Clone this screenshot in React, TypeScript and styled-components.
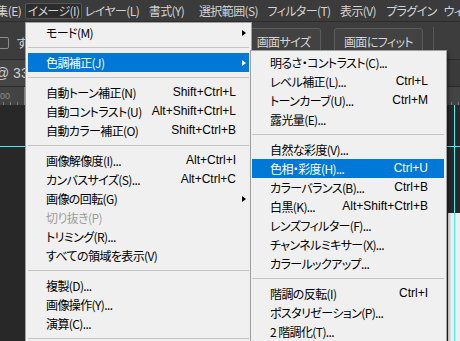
import React from 'react';
import styled, { createGlobalStyle } from 'styled-components';

const UI_FONT = `"Noto Sans CJK JP", "Liberation Sans", sans-serif`;
const KEY_FONT = `"Liberation Sans", "Noto Sans CJK JP", sans-serif`;

type Entry =
  | { sep: true }
  | { label: string; keys?: string; sub?: boolean; active?: boolean; disabled?: boolean };

// widths follow the menu bar hit boxes of the original window
const TOP_MENUS = [
  { label: '編集(E)', w: 42 },
  { label: 'イメージ(I)', w: 57, active: true },
  { label: 'レイヤー(L)', w: 58 },
  { label: '書式(Y)', w: 49 },
  { label: '選択範囲(S)', w: 73 },
  { label: 'フィルター(T)', w: 66 },
  { label: '表示(V)', w: 50 },
  { label: 'プラグイン', w: 55 },
  { label: 'ウィンドウ(W)', w: 72 },
  { label: 'ヘルプ(H)', w: 56 },
];

const IMAGE_MENU: Entry[] = [
  { label: 'モード(M)', sub: true },
  { sep: true },
  { label: '色調補正(J)', sub: true, active: true },
  { sep: true },
  { label: '自動トーン補正(N)', keys: 'Shift+Ctrl+L' },
  { label: '自動コントラスト(U)', keys: 'Alt+Shift+Ctrl+L' },
  { label: '自動カラー補正(O)', keys: 'Shift+Ctrl+B' },
  { sep: true },
  { label: '画像解像度(I)...', keys: 'Alt+Ctrl+I' },
  { label: 'カンバスサイズ(S)...', keys: 'Alt+Ctrl+C' },
  { label: '画像の回転(G)', sub: true },
  { label: '切り抜き(P)', disabled: true },
  { label: 'トリミング(R)...' },
  { label: 'すべての領域を表示(V)' },
  { sep: true },
  { label: '複製(D)...' },
  { label: '画像操作(Y)...' },
  { label: '演算(C)...' },
  { sep: true },
  { label: '変数(B)', sub: true },
];

const ADJUST_MENU: Entry[] = [
  { label: '明るさ・コントラスト(C)...' },
  { label: 'レベル補正(L)...', keys: 'Ctrl+L' },
  { label: 'トーンカーブ(U)...', keys: 'Ctrl+M' },
  { label: '露光量(E)...' },
  { sep: true },
  { label: '自然な彩度(V)...' },
  { label: '色相・彩度(H)...', keys: 'Ctrl+U', active: true },
  { label: 'カラーバランス(B)...', keys: 'Ctrl+B' },
  { label: '白黒(K)...', keys: 'Alt+Shift+Ctrl+B' },
  { label: 'レンズフィルター(F)...' },
  { label: 'チャンネルミキサー(X)...' },
  { label: 'カラールックアップ...' },
  { sep: true },
  { label: '階調の反転(I)', keys: 'Ctrl+I' },
  { label: 'ポスタリゼーション(P)...' },
  { label: '2 階調化(T)...' },
  { label: '階調の選択(G)...' },
];

const MenuList: React.FC<{ items: Entry[]; withArrows?: boolean; trail: number }> = ({
  items,
  withArrows = false,
  trail,
}) => (
  <>
    {items.map((item, i) =>
      'sep' in item ? (
        <Separator key={i} />
      ) : (
        <Row key={i} $active={item.active} $disabled={item.disabled} $trail={trail}>
          <Label>{item.label}</Label>
          {item.keys && <Keys>{item.keys}</Keys>}
          {withArrows && <ArrowSlot>{item.sub && <Arrow $active={item.active} />}</ArrowSlot>}
        </Row>
      )
    )}
  </>
);

const App: React.FC = () => {
  return (
    <>
      <GlobalStyle />
      <Screen>
        <MenuBar>
          <MenuBarList>
            {TOP_MENUS.map((m) => (
              <MenuBarItem key={m.label} $w={m.w} $active={m.active}>
                {m.label}
              </MenuBarItem>
            ))}
          </MenuBarList>
        </MenuBar>

        <OptionsBar>
          <CheckGroup>
            <CheckBox />
            <OptionLabel>すべて</OptionLabel>
          </CheckGroup>
          <ButtonGroup>
            <ToolButton $w={75}>画面サイズ</ToolButton>
            <ToolButton $w={89}>画面にフィット</ToolButton>
            <BarDivider />
          </ButtonGroup>
        </OptionsBar>

        <TabRow>
          <DocTab>@ 33.3%</DocTab>
        </TabRow>

        <Ruler>
          <RulerCell>00</RulerCell>
        </Ruler>

        <Canvas>
          <Document />
          <GuideH />
          <GuideV />
        </Canvas>

        <DropMenu>
          <MenuList items={IMAGE_MENU} withArrows trail={0} />
        </DropMenu>

        <SubMenu>
          <MenuList items={ADJUST_MENU} trail={16} />
        </SubMenu>
      </Screen>
    </>
  );
};

const GlobalStyle = createGlobalStyle`
  html, body {
    margin: 0;
    padding: 0;
    background: #282828;
  }
  body {
    width: 460px;
    height: 341px;
    overflow: hidden;
    font-family: ${UI_FONT};
  }
  * {
    box-sizing: border-box;
  }
`;

const Screen = styled.div`
  position: relative;
  width: 460px;
  height: 341px;
  overflow: hidden;
  display: flex;
  flex-direction: column;
  background: #282828;
`;

const MenuBar = styled.div`
  height: 22px;
  flex: none;
  background: #3b3b3b;
  border-bottom: 1px solid #2d2d2d;
  display: flex;
  align-items: center;
  overflow: hidden;
`;

const MenuBarList = styled.div`
  display: flex;
  align-items: center;
  gap: 1px;
  margin-left: -18px;
  white-space: nowrap;
`;

const MenuBarItem = styled.div<{ $w: number; $active?: boolean }>`
  width: ${(p) => p.$w}px;
  flex: none;
  height: 16px;
  border: 1px solid ${(p) => (p.$active ? '#565656' : 'transparent')};
  border-radius: 2px;
  background: ${(p) => (p.$active ? '#2c2c2c' : 'transparent')};
  color: #d4d4d4;
  font-size: 12px;
  line-height: 14px;
  letter-spacing: -0.6px;
  text-align: center;
  font-feature-settings: 'palt' 1;
`;

const OptionsBar = styled.div`
  height: 38px;
  flex: none;
  background: #3d3d3d;
  border-bottom: 1px solid #2a2a2a;
  display: flex;
  align-items: center;
  padding: 1px 26px 0 0;
`;

const CheckGroup = styled.div`
  display: flex;
  align-items: center;
  gap: 7px;
  margin-left: -4px;
  margin-top: 3px;
  white-space: nowrap;
`;

const CheckBox = styled.span`
  width: 13px;
  height: 12px;
  border: 1px solid #8c8c8c;
  border-radius: 2px;
`;

const OptionLabel = styled.span`
  color: #d4d4d4;
  font-size: 12px;
`;

const ButtonGroup = styled.div`
  margin-left: auto;
  display: flex;
  align-items: center;
  gap: 13px;
`;

const ToolButton = styled.div<{ $w: number }>`
  width: ${(p) => p.$w}px;
  height: 26px;
  border: 1px solid #5c5c5c;
  border-radius: 3px;
  background: #424242;
  color: #d6d6d6;
  font-size: 12px;
  letter-spacing: -0.6px;
  font-feature-settings: 'palt' 1;
  display: flex;
  align-items: center;
  justify-content: center;
  white-space: nowrap;
`;

const BarDivider = styled.span`
  width: 1px;
  height: 28px;
  margin-left: -3px;
  background: #595959;
`;

const TabRow = styled.div`
  height: 27px;
  flex: none;
  background: #3a3a3a;
  border-bottom: 1px solid #2a2a2a;
  display: flex;
  overflow: hidden;
`;

const DocTab = styled.div`
  background: #454545;
  color: #cccccc;
  font-family: ${KEY_FONT};
  font-size: 14px;
  line-height: 26px;
  margin-left: -5px;
  padding-right: 12px;
  white-space: nowrap;
`;

const Ruler = styled.div`
  height: 18px;
  flex: none;
  display: flex;
  background-color: #434343;
  background-image: repeating-linear-gradient(
    to right,
    #7a7a7a 0 1px,
    transparent 1px 7px
  );
  background-size: 100% 3px;
  background-position: 3px bottom;
  background-repeat: repeat-x;
`;

const RulerCell = styled.div`
  width: 25px;
  border-right: 1px solid #7d7d7d;
  color: #8e8e8e;
  font-family: ${KEY_FONT};
  font-size: 9px;
  line-height: 18px;
`;

const Canvas = styled.div`
  flex: 1;
  position: relative;
  background: #282828;
`;

const Document = styled.div`
  position: absolute;
  left: 448px;
  top: 108px;
  right: 0;
  bottom: 0;
  background: #efefef;
`;

const GuideH = styled.div`
  position: absolute;
  left: 0;
  right: 0;
  top: 41px;
  height: 1px;
  background: #3ff2f2;
`;

const GuideV = styled.div`
  position: absolute;
  top: 0;
  bottom: 0;
  left: 454px;
  width: 1px;
  background: #3ff2f2;
`;

const DropMenu = styled.div`
  position: absolute;
  left: 25px;
  top: 22px;
  width: 227px;
  background: #f0f0f0;
  border: 1px solid #a0a0a0;
  padding: 0 2px 2px 2px;
  z-index: 2;
`;

const SubMenu = styled.div`
  position: absolute;
  left: 250px;
  top: 50px;
  width: 197px;
  background: #f0f0f0;
  border: 1px solid #a0a0a0;
  padding: 2px 2px 2px 1px;
  box-shadow: 2px 2px 3px rgba(0, 0, 0, 0.35);
  z-index: 3;
`;

const Row = styled.div<{ $active?: boolean; $disabled?: boolean; $trail: number }>`
  height: 19px;
  display: flex;
  align-items: center;
  padding: 0 ${(p) => p.$trail}px 0 18px;
  background: ${(p) => (p.$active ? '#0078d7' : 'transparent')};
  color: ${(p) => (p.$active ? '#ffffff' : p.$disabled ? '#9d9d9d' : '#000000')};
  white-space: nowrap;
`;

const Label = styled.span`
  flex: 1;
  font-family: ${UI_FONT};
  font-size: 12px;
  line-height: 19px;
  letter-spacing: -0.6px;
  font-feature-settings: 'palt' 1;
`;

const Keys = styled.span`
  font-family: ${KEY_FONT};
  font-size: 12px;
  line-height: 19px;
`;

const ArrowSlot = styled.span`
  width: 13px;
  height: 19px;
  flex: none;
  display: flex;
  align-items: center;
  padding-left: 6px;
`;

const Arrow = styled.span<{ $active?: boolean }>`
  width: 0;
  height: 0;
  border-top: 3.5px solid transparent;
  border-bottom: 3.5px solid transparent;
  border-left: 4px solid ${(p) => (p.$active ? '#ffffff' : '#000000')};
`;

const Separator = styled.div`
  height: 1px;
  margin: 5px 0;
  background: #c4c4c4;
`;

export default App;
